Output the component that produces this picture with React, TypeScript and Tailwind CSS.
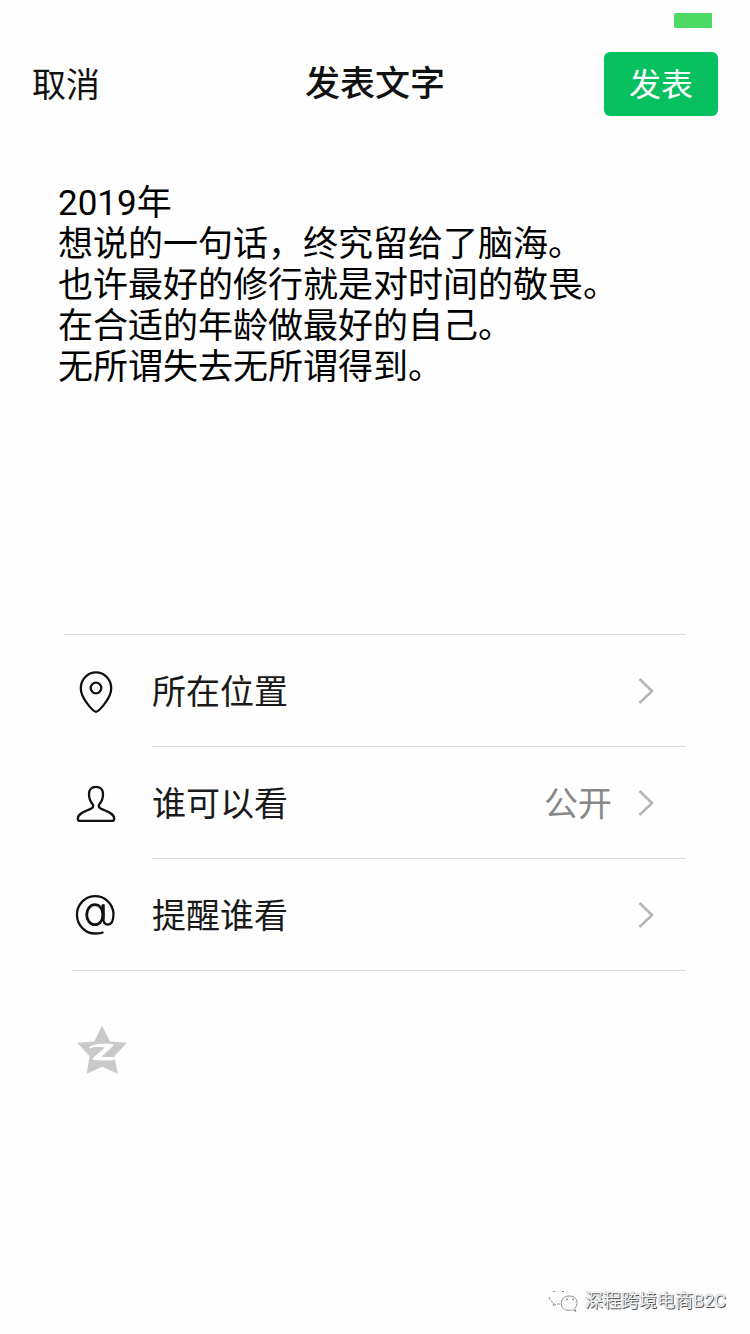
import { useState } from 'react';
import type { ReactNode } from 'react';

const DEFAULT_TEXT = `2019年
想说的一句话，终究留给了脑海。
也许最好的修行就是对时间的敬畏。
在合适的年龄做最好的自己。
无所谓失去无所谓得到。`;

function PinIcon() {
  return (
    <svg viewBox="0 0 48 48" className="size-12" fill="none" stroke="currentColor" strokeWidth="2.3" aria-hidden="true">
      <path d="M24 44.8C22 44.8 8.8 32.2 8.8 21.2a15.2 15.8 0 0 1 30.4 0C39.2 32.2 26 44.8 24 44.8Z" />
      <circle cx="24" cy="21" r="5.3" />
    </svg>
  );
}

function PersonIcon() {
  return (
    <svg viewBox="0 0 48 48" className="size-12" fill="none" stroke="currentColor" strokeWidth="2.3" strokeLinejoin="round" aria-hidden="true">
      <path d="M24 7.8c4.4 0 7 3 7 7.4 0 4.3-1.3 7.3-3.5 9.8-1.2 1.5-1 3.2.7 4.2C32.5 31.8 42 33.6 42.2 39.5c0 1.6-.5 2.3-1.7 2.3H7.5c-1.2 0-1.7-.7-1.7-2.3C6 33.6 15.5 31.8 19.8 29.2c1.7-1 1.9-2.7.7-4.2C18.3 22.5 17 19.5 17 15.2c0-4.4 2.6-7.4 7-7.4Z" />
    </svg>
  );
}

function MentionIcon() {
  return (
    <svg viewBox="0 0 48 48" className="size-12" fill="none" stroke="currentColor" strokeWidth="2.3" aria-hidden="true">
      <path d="M31.5 41.2C29 42.2 26.500 42.500 23.500 42.500A18.300 18.700 0 1 1 41.500 22.500C41.500 29.500 39.500 33.600 35.800 33.600c-3 0-4.400-2.300-4.400-6V13.500" />
      <ellipse cx="22.9" cy="23.7" rx="8.2" ry="10" strokeWidth="2.8" />
      <path d="M31 13.5V28" strokeWidth="3" />
    </svg>
  );
}

function ChevronIcon() {
  return (
    <svg viewBox="0 0 16 28" className="h-7 w-4" fill="none" stroke="#b4b4b4" strokeWidth="2.6" aria-hidden="true">
      <path d="M1.5 2 14 14 1.5 26" />
    </svg>
  );
}

function QzoneIcon() {
  return (
    <svg viewBox="0 0 50 50" className="size-[50px]" aria-hidden="true">
      <path
        fill="#c9c9c9"
        d="M25 .8 33 16.5 50 17.8 37.4 31 40.8 48.8 25 41.8 9.7 48.8 12.6 31 0 17.8 17.3 16.5Z"
      />
      <path
        fill="#fefefe"
        d="M12.5 21.8C19 18 28 17.8 36 19.2c.6.9.2 1.700-.8 2.600L24.500 31.800c5.500.5 11.500.3 18.100-.6-2 2.600-5.500 3.800-10 4.200-6 .4-11.500.2-16.600-.6-.5-1.200 0-2 1-2.800L28 22.600c-5.500-.8-10.500-.6-15.500.6Z"
      />
    </svg>
  );
}

function BubblesIcon() {
  return (
    <svg viewBox="0 0 32 24" className="h-6 w-8" fill="none" stroke="#8c8c8c" strokeWidth="1" aria-hidden="true">
      <path d="M2 8c1 4 3 5 5 6l-1 3 3-2h4" strokeDasharray="3 1" />
      <path d="M6 2.5h3M15 2.5h3" strokeDasharray="2 1" />
      <path d="M27.5 19.5c3-3 3.500-7 1-10s-9-3.500-12-.5-3 8 0 10.500 6.500 2 9 1.300l3.500 1.700Z" />
      <path d="M19 10.500h2M25 10.500h2" strokeWidth="1.5" />
    </svg>
  );
}

type RowProps = {
  icon: ReactNode;
  label: string;
  value?: string;
  last?: boolean;
};

function OptionRow({ icon, label, value, last }: RowProps) {
  return (
    <button type="button" className="flex h-28 w-full text-left">
      <span className="flex w-16 shrink-0 items-center justify-center text-[#111111]">{icon}</span>
      <span className={`ml-6 flex flex-1 items-center border-b pr-8 ${last ? 'border-transparent' : 'border-[#dddddd]'}`}>
        <span className="flex-1 pt-1 text-[#1a1a1a]">{label}</span>
        {value && <span className="mr-[26px] pt-1 text-[#888888]">{value}</span>}
        <ChevronIcon />
      </span>
    </button>
  );
}

export default function App() {
  const [text, setText] = useState(DEFAULT_TEXT);

  return (
    <div className="flex min-h-screen flex-col bg-[#fefefe] font-[Roboto,'Noto_Sans_CJK_SC',sans-serif] text-[#111111]">
      {/* Status bar, only the battery level shows */}
      <div className="flex justify-end pt-[13px] pr-[38px]">
        <div className="h-[15px] w-[38px] rounded-l-xs bg-[#4cd964]" />
      </div>

      <header className="mt-6 grid h-16 grid-cols-3 items-center px-8">
        <button type="button" className="justify-self-start pt-0.5 text-[34px] leading-[62px]">
          取消
        </button>
        <h1 className="justify-self-center pt-0.5 text-[35px] leading-[62px] font-medium whitespace-nowrap">发表文字</h1>
        <button
          type="button"
          className="h-16 w-[114px] justify-self-end rounded-md bg-[#07c160] pt-0.5 text-[32px] leading-[62px] text-white"
        >
          发表
        </button>
      </header>

      <textarea
        aria-label="发表文字"
        value={text}
        onChange={(e) => setText(e.target.value)}
        className="mx-[58px] mt-[67px] h-[451px] resize-none text-[35px] leading-[41px] text-black outline-none"
      />

      <section className="mx-16 text-[34px]">
        <div className="border-t border-[#dddddd]">
          <OptionRow icon={<PinIcon />} label="所在位置" />
          <OptionRow icon={<PersonIcon />} label="谁可以看" value="公开" />
          <OptionRow icon={<MentionIcon />} label="提醒谁看" last />
        </div>
        <div className="-mt-px ml-2 border-t border-[#dddddd]" />
        <button type="button" aria-label="QQ空间" className="mt-[54px] ml-[13px] block">
          <QzoneIcon />
        </button>
      </section>

      <footer className="mt-auto flex items-center justify-end gap-1.5 pr-6 pb-[19px]">
        <BubblesIcon />
        <span className="text-lg text-[#f4f4f4] [text-shadow:1px_1px_0_#555555,0_0_1px_#777777]">深程跨境电商B2C</span>
      </footer>
    </div>
  );
}
